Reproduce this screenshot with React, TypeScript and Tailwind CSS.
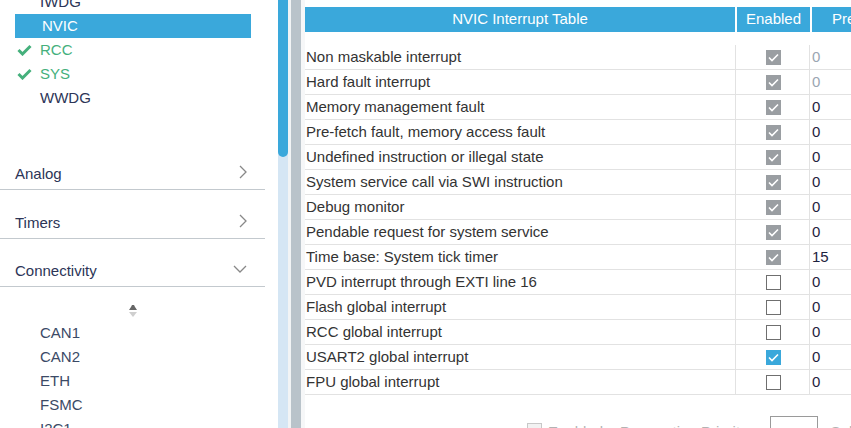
import React from 'react';

const font = { fontFamily: '"Liberation Sans", Arial, sans-serif' };

type Row = { name: string; state: 'fixed' | 'off' | 'on'; value: string; dim?: boolean };

const rows: Row[] = [
  { name: 'Non maskable interrupt', state: 'fixed', value: '0', dim: true },
  { name: 'Hard fault interrupt', state: 'fixed', value: '0', dim: true },
  { name: 'Memory management fault', state: 'fixed', value: '0' },
  { name: 'Pre-fetch fault, memory access fault', state: 'fixed', value: '0' },
  { name: 'Undefined instruction or illegal state', state: 'fixed', value: '0' },
  { name: 'System service call via SWI instruction', state: 'fixed', value: '0' },
  { name: 'Debug monitor', state: 'fixed', value: '0' },
  { name: 'Pendable request for system service', state: 'fixed', value: '0' },
  { name: 'Time base: System tick timer', state: 'fixed', value: '15' },
  { name: 'PVD interrupt through EXTI line 16', state: 'off', value: '0' },
  { name: 'Flash global interrupt', state: 'off', value: '0' },
  { name: 'RCC global interrupt', state: 'off', value: '0' },
  { name: 'USART2 global interrupt', state: 'on', value: '0' },
  { name: 'FPU global interrupt', state: 'off', value: '0' },
];

function Tick() {
  return (
    <svg width="11" height="9" viewBox="0 0 11 9" fill="none">
      <path d="M1 4.5 L4 7.5 L10 1.5" stroke="white" strokeWidth="1.6" />
    </svg>
  );
}

function Box({ state }: { state: Row['state'] }) {
  if (state === 'off')
    return <div className="w-[15px] h-[15px] shrink-0 border border-[#6f6f6f] bg-white" />;
  return (
    <div
      className={`w-[15px] h-[15px] shrink-0 flex items-center justify-center ${
        state === 'on' ? 'bg-[#3aa8db]' : 'bg-[#9a9ea2]'
      }`}
    >
      <Tick />
    </div>
  );
}

function GreenCheck() {
  return (
    <svg width="15" height="12" viewBox="0 0 15 12" fill="none" className="shrink-0">
      <path d="M1.5 6 L5.5 10 L13.5 2" stroke="#45b07c" strokeWidth="3" />
    </svg>
  );
}

function Section({ label, open, h }: { label: string; open?: boolean; h: string }) {
  return (
    <div className={`${h} shrink-0 flex items-end border-b border-[#c3c9ce] w-[265px]`}>
      <div className="flex items-center justify-between w-full pl-[15px] pr-[18px] pb-[4px] text-[15px] text-[#2c3557]">
        <span>{label}</span>
        {open ? (
          <svg width="14" height="8" viewBox="0 0 14 8" fill="none" className="mb-[4px]">
            <path d="M1 1 L7 7 L13 1" stroke="#888" strokeWidth="1.3" />
          </svg>
        ) : (
          <svg width="8" height="14" viewBox="0 0 8 14" fill="none" className="mb-[4px]">
            <path d="M1 1 L7 7 L1 13" stroke="#888" strokeWidth="1.3" />
          </svg>
        )}
      </div>
    </div>
  );
}

export default function App() {
  return (
    <div className="w-[851px] h-[428px] overflow-hidden flex bg-white" style={font}>
      {/* Left tree panel */}
      <div className="w-[278px] shrink-0 flex flex-col overflow-hidden">
        <div className="mt-[-10px] text-[15px] shrink-0">
          <div className="h-6 flex items-center pl-[40px] text-[#2c3557]">IWDG</div>
          <div className="h-6 ml-[15px] w-[236px] flex items-center pl-[27px] bg-[#3aa8db] text-white">NVIC</div>
          <div className="h-6 flex items-center pl-[17px] text-[#45b07c]">
            <GreenCheck />
            <span className="ml-[8px]">RCC</span>
          </div>
          <div className="h-6 flex items-center pl-[17px] text-[#45b07c]">
            <GreenCheck />
            <span className="ml-[8px]">SYS</span>
          </div>
          <div className="h-6 flex items-center pl-[40px] text-[#2c3557]">WWDG</div>
        </div>
        <div className="h-[30px] shrink-0" />
        <Section label="Analog" h="h-[50px]" />
        <Section label="Timers" h="h-[49px]" />
        <Section label="Connectivity" open h="h-[48px]" />
        <div className="flex flex-col items-center w-[265px] mt-[17px] shrink-0">
          <svg width="10" height="14" viewBox="0 0 10 14">
            <path d="M1 6 L3 3 L4 1 L6 1 L7 3 L9 6 Z" fill="#666" />
            <path d="M1 8 L9 8 L5 13 Z" fill="#cfcfcf" />
          </svg>
        </div>
        <div className="mt-[3px] text-[15px] text-[#3b4a66] shrink-0">
          {['CAN1', 'CAN2', 'ETH', 'FSMC', 'I2C1'].map((t) => (
            <div key={t} className="h-6 flex items-center pl-[40px]">
              {t}
            </div>
          ))}
        </div>
      </div>

      {/* Scrollbar */}
      <div className="w-[10px] shrink-0 bg-[#d5e6f4]">
        <div className="h-[157px] bg-[#3aa8db] rounded-b-[5px]" />
      </div>
      <div className="w-[3px] shrink-0 bg-[#f2f4f5]" />
      <div className="w-[10px] shrink-0 bg-[#b9c3ca]" />
      <div className="w-[4px] shrink-0 bg-[#f6f7f8]" />

      {/* Right table panel */}
      <div className="flex-1 pt-[7px] min-w-0 overflow-hidden">
        <div className="flex h-[25px] text-[15px] text-white whitespace-nowrap">
          <div className="w-[430px] shrink-0 bg-[#3aa8db] flex items-center justify-center">
            NVIC Interrupt Table
          </div>
          <div className="w-[2px] shrink-0" />
          <div className="w-[73px] shrink-0 bg-[#3aa8db] flex items-center justify-center">Enabled</div>
          <div className="w-[2px] shrink-0" />
          <div className="w-[160px] shrink-0 bg-[#3aa8db] flex items-center pl-[20px]">Preemption Priority</div>
        </div>
        <div className="mt-[13px] w-[620px]">
          {rows.map((r) => (
            <div key={r.name} className="flex h-[25px] border-b border-[#e2e2e2] text-[15px]">
              <div className="w-[430px] shrink-0 flex items-center pl-[1px] text-[#333]">{r.name}</div>
              <div className="w-[75px] shrink-0 flex items-center justify-center border-l border-r border-[#e2e2e2] pl-[1px]">
                <Box state={r.state} />
              </div>
              <div className={`flex-1 flex items-center pl-[2px] ${r.dim ? 'text-[#9aa6b2]' : 'text-[#1e2340]'}`}>
                {r.value}
              </div>
            </div>
          ))}
        </div>
        <div className="flex items-start mt-[21px] text-[15px] text-[#b3b3b3] whitespace-nowrap">
          <div className="w-[15px] h-[15px] shrink-0 border border-[#c8c8c8] bg-[#f2f2f2] ml-[222px] mt-[7px]" />
          <span className="ml-[6px] mt-[5px] shrink-0">Enabled</span>
          <span className="ml-[17px] mt-[5px] shrink-0">Preemption Priority</span>
          <div className="w-[48px] h-[26px] shrink-0 border border-[#9a9a9a] ml-[22px]" />
          <span className="ml-[13px] mt-[5px] shrink-0">Sub Priority</span>
        </div>
      </div>
    </div>
  );
}
